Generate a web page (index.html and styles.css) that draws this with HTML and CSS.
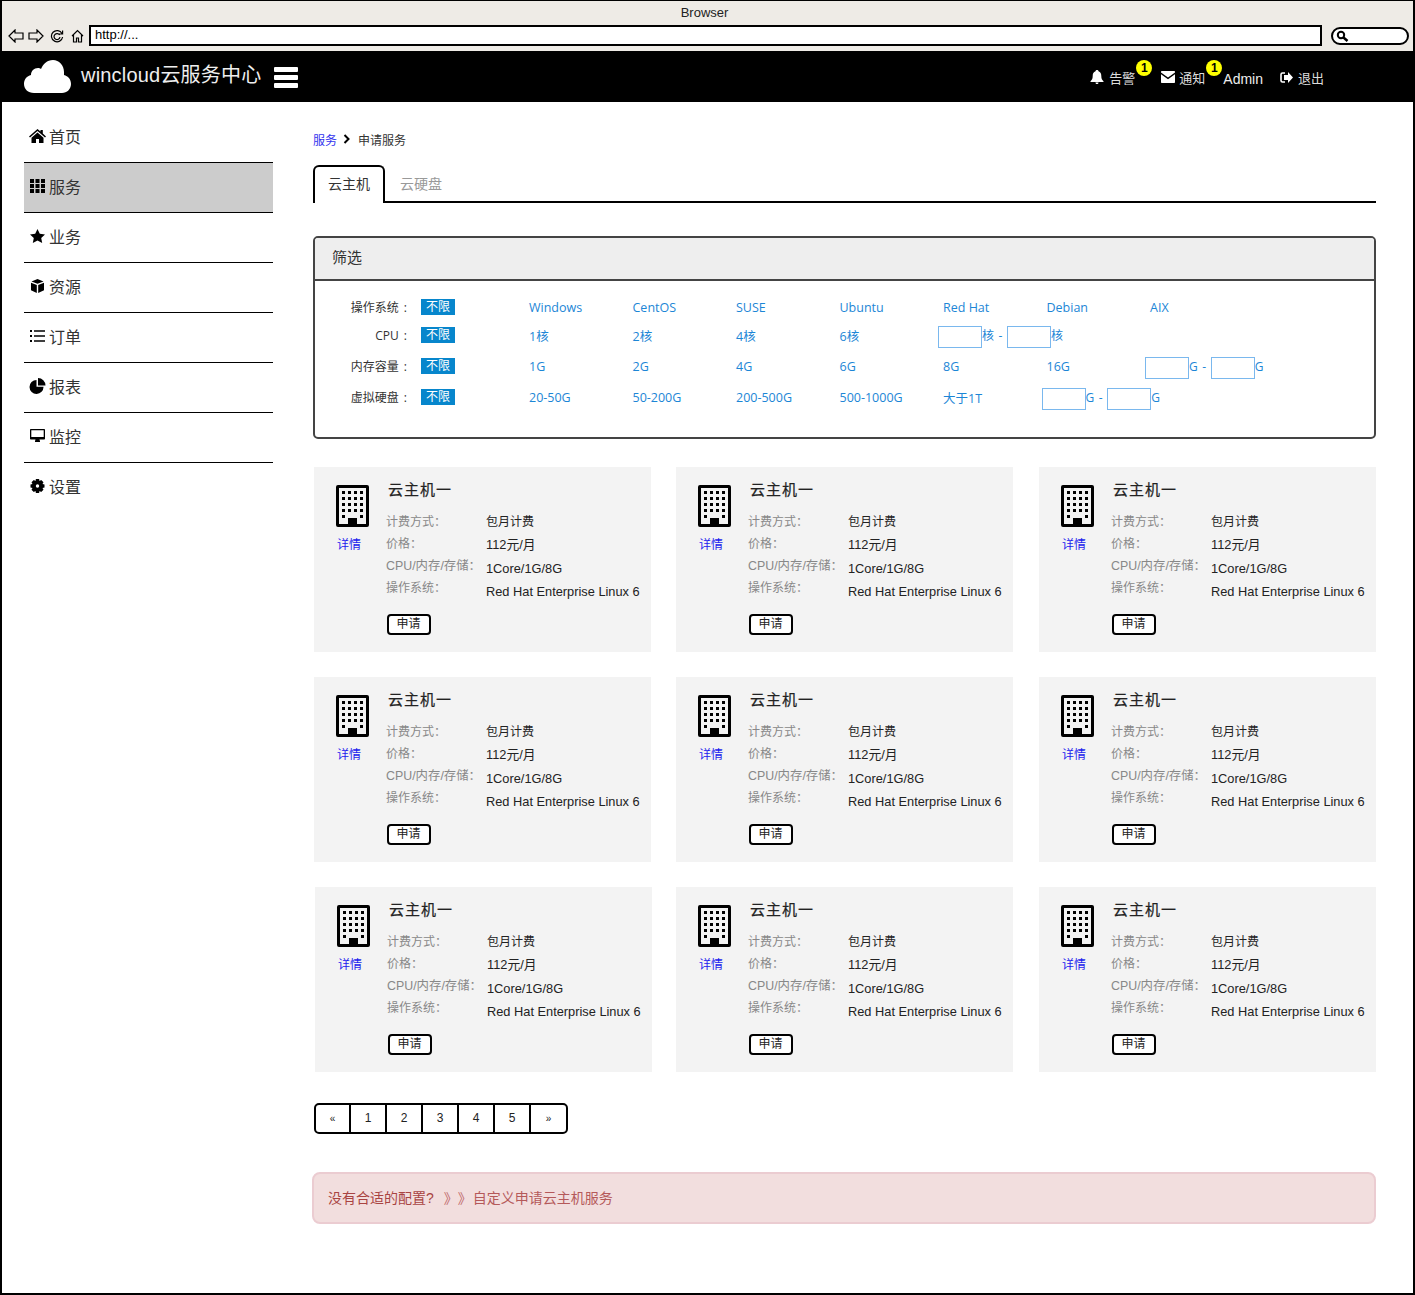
FILE: index.html
```html
<!DOCTYPE html>
<html lang="zh-CN">
<head>
  <meta charset="UTF-8" />
  <title>wincloud云服务中心</title>
  <link rel="stylesheet" href="styles.css">
</head>
<body>

<svg class="defs" width="0" height="0">
  <symbol id="i-building" viewBox="0 0 33 42">
    <path fill-rule="evenodd" d="M2 0H31a2 2 0 0 1 2 2V40a2 2 0 0 1-2 2H2a2 2 0 0 1-2-2V2a2 2 0 0 1 2-2ZM3 3V39H12V33H21V39H30V3Z"/>
    <path d="M6 6h3v3H6zM12 6h3v3h-3zM18 6h3v3h-3zM24 6h3v3h-3zM6 12h3v3H6zM12 12h3v3h-3zM18 12h3v3h-3zM24 12h3v3h-3zM6 18h3v3H6zM12 18h3v3h-3zM18 18h3v3h-3zM24 18h3v3h-3zM6 24h3v3H6zM12 24h3v3h-3zM18 24h3v3h-3zM24 24h3v3h-3zM6 30h3v3H6zM24 30h3v3h-3z"/>
  </symbol>
</svg>

<div class="frame">

  <!-- 浏览器外框 -->
  <div class="browser">
    <div class="browser-title">Browser</div>
    <div class="browser-bar">
      <svg class="nav-icon" width="16" height="14" viewBox="0 0 16 14"><path d="M1 7 7 1V4H15V10H7V13Z"/></svg>
      <svg class="nav-icon" width="16" height="14" viewBox="0 0 16 14"><path d="M15 7 9 1V4H1V10H9V13Z"/></svg>
      <svg class="nav-icon" width="14" height="14" viewBox="0 0 14 14"><path d="M12 4.5A5.6 5.6 0 1 0 12.6 8M12.6 1.5V5H9M9.6 6A3 3 0 1 0 10 8.2"/></svg>
      <svg class="nav-icon" width="13" height="14" viewBox="0 0 13 14"><path d="M1 7 6.500 1.500 12 7M2.500 6V13H5.500V9H7.500V13H10.500V6"/></svg>
      <div class="url-box">http://...</div>
      <div class="search-box">
        <svg width="13" height="12" viewBox="0 0 13 12"><circle cx="5" cy="5" r="3.200" fill="none" stroke="#000" stroke-width="2"/><path d="M7.500 7.500 11.500 11" stroke="#000" stroke-width="2.500"/></svg>
      </div>
    </div>
  </div>

  <!-- 顶部导航 -->
  <header class="topbar">
    <svg class="logo" width="47" height="33" viewBox="0 0 47 33"><path d="M10 33C4 33 0 29 0 24C0 19 3 16 7 15C7 11 10 8 14 8C15 8 16 8 17 9C19 4 23 0 29 0C35 0 40 5 40 12C40 13 40 14 40 15C44 16 47 19 47 24C47 29 43 33 38 33Z" fill="#fff"/></svg>
    <div class="brand">wincloud云服务中心</div>
    <div class="hamburger"><span></span><span></span><span></span></div>

    <div class="top-right">
      <div class="top-item">
        <svg width="14" height="14" viewBox="0 0 14 14"><path d="M7 0C8 0 8.500 .6 8.500 1.300C10.500 2 11.300 3.500 11.300 6C11.300 9 12.200 10 13.500 11.200V12H.5V11.200C1.800 10 2.700 9 2.700 6C2.700 3.500 3.500 2 5.500 1.300C5.500 .6 6 0 7 0ZM5.500 12.500H8.500C8.500 13.500 7.800 14 7 14S5.500 13.500 5.500 12.500Z" fill="#fff"/></svg>
        <span>告警</span>
        <b class="badge">1</b>
      </div>
      <div class="top-item">
        <svg width="14" height="12" viewBox="0 0 14 12"><path d="M1 0H13C13.600 0 14 .4 14 1V1.500L7 6.500 0 1.500V1C0 .4 .4 0 1 0ZM0 3.200 7 8.200 14 3.200V11C14 11.600 13.600 12 13 12H1C.4 12 0 11.600 0 11Z" fill="#fff"/></svg>
        <span>通知</span>
        <b class="badge">1</b>
      </div>
      <div class="top-admin">Admin</div>
      <div class="top-item">
        <svg width="13" height="11" viewBox="0 0 13 11"><path d="M5 1H2.500C1.500 1 1 1.500 1 2.500V8.500C1 9.500 1.500 10 2.500 10H5" fill="none" stroke="#fff" stroke-width="1.600"/><path d="M8 0 13 5.500 8 11V8H4V3H8Z" fill="#fff"/></svg>
        <span>退出</span>
      </div>
    </div>
  </header>

  <div class="layout">

    <!-- 左侧菜单 -->
    <ul class="sidebar">
      <li>
        <svg width="17" height="14" viewBox="0 0 17 14"><path d="M8.500 0 11.500 2.600V1H13.800V4.600L17 7.400 16 8.500 8.500 2.100 1 8.500 0 7.400ZM8.500 3.600 14.500 8.700V14H10V10H7V14H2.500V8.700Z"/></svg>
        首页
      </li>
      <li class="active">
        <svg width="15" height="14" viewBox="0 0 15 14"><path d="M0 0h4v4H0zM5.500 0h4v4h-4zM11 0h4v4h-4zM0 5h4v4H0zM5.500 5h4v4h-4zM11 5h4v4h-4zM0 10h4v4H0zM5.500 10h4v4h-4zM11 10h4v4h-4z"/></svg>
        服务
      </li>
      <li>
        <svg width="15" height="14" viewBox="0 0 15 14"><path d="M7.500 0 9.800 4.800 15 5.400 11.200 9 12.200 14 7.500 11.500 2.800 14 3.800 9 0 5.400 5.200 4.800Z"/></svg>
        业务
      </li>
      <li>
        <svg width="13" height="14" viewBox="0 0 13 14"><path d="M6.500 0 12.500 2.400 6.500 4.800 .5 2.400ZM0 3.800 5.800 6.100V14L0 11.200ZM13 3.800V11.200L7.200 14V6.100Z"/></svg>
        资源
      </li>
      <li>
        <svg width="15" height="12" viewBox="0 0 15 12"><path d="M0 0h2v2H0zM4 .2h11v1.600H4zM0 5h2v2H0zM4 5.200h11v1.600H4zM0 10h2v2H0zM4 10.200h11v1.600H4z"/></svg>
        订单
      </li>
      <li>
        <svg width="16" height="16" viewBox="0 0 16 16"><path d="M7 2V8.800H14A7 7 0 1 1 7 2ZM8.500 0A7.500 7.500 0 0 1 16 7.500H8.500Z"/></svg>
        报表
      </li>
      <li>
        <svg width="15" height="13" viewBox="0 0 15 13"><path fill-rule="evenodd" d="M1 0H14C14.600 0 15 .4 15 1V9.500C15 10.100 14.600 10.500 14 10.500H9.500L10 12.300V13H5V12.300L5.500 10.500H1C.4 10.500 0 10.100 0 9.500V1C0 .4 .4 0 1 0ZM1.300 1.300V8H13.700V1.300Z"/></svg>
        监控
      </li>
      <li>
        <svg width="14" height="14" viewBox="0 0 14 14"><path fill-rule="evenodd" d="M5.400 0H8.600L9 2 10.700 1 13 3.200 12 5 14 5.400V8.600L12 9 13 10.800 10.700 13 9 12 8.600 14H5.400L5 12 3.300 13 1 10.800 2 9 0 8.600V5.400L2 5 1 3.200 3.300 1 5 2ZM7 5.300A1.700 1.700 0 1 0 7 8.700 1.700 1.700 0 1 0 7 5.300Z"/></svg>
        设置
      </li>
    </ul>

    <main class="content">

      <div class="breadcrumb">
        <a>服务</a>
        <svg width="7" height="10" viewBox="0 0 7 10"><path d="M1.500 1 5.500 5 1.500 9" fill="none" stroke="#000" stroke-width="2"/></svg>
        <span>申请服务</span>
      </div>

      <div class="tabs">
        <div class="tab active">云主机</div>
        <div class="tab">云硬盘</div>
      </div>

      <section class="filter">
        <div class="filter-head">筛选</div>
        <div class="filter-body">
          <div class="filter-row row-os">
            <label>操作系统 :</label><span class="tag">不限</span>
            <a>Windows</a><a>CentOS</a><a>SUSE</a><a>Ubuntu</a><a>Red Hat</a><a>Debian</a><a>AIX</a>
          </div>
          <div class="filter-row row-cpu">
            <label>CPU :</label><span class="tag">不限</span>
            <a>1核</a><a>2核</a><a>4核</a><a>6核</a>
            <div class="range"><input type="text">核 - <input type="text">核</div>
          </div>
          <div class="filter-row row-mem">
            <label>内存容量 :</label><span class="tag">不限</span>
            <a>1G</a><a>2G</a><a>4G</a><a>6G</a><a>8G</a><a>16G</a>
            <div class="range"><input type="text">G - <input type="text">G</div>
          </div>
          <div class="filter-row row-disk">
            <label>虚拟硬盘 :</label><span class="tag">不限</span>
            <a>20-50G</a><a>50-200G</a><a>200-500G</a><a>500-1000G</a><a>大于1T</a>
            <div class="range"><input type="text">G - <input type="text">G</div>
          </div>
        </div>
      </section>

      <section class="cards">
        <div class="card">
          <div class="card-side"><svg class="bld" width="33" height="42"><use href="#i-building"/></svg><a>详情</a></div>
          <div class="card-main">
            <h4>云主机一</h4>
            <div class="specs">
              <div class="spec-labels"><span>计费方式：</span><span>价格：</span><span>CPU/内存/存储：</span><span>操作系统：</span></div>
              <div class="spec-values"><span>包月计费</span><span>112元/月</span><span>1Core/1G/8G</span><span>Red Hat Enterprise Linux 6</span></div>
            </div>
            <button>申请</button>
          </div>
        </div>
        <div class="card">
          <div class="card-side"><svg class="bld" width="33" height="42"><use href="#i-building"/></svg><a>详情</a></div>
          <div class="card-main">
            <h4>云主机一</h4>
            <div class="specs">
              <div class="spec-labels"><span>计费方式：</span><span>价格：</span><span>CPU/内存/存储：</span><span>操作系统：</span></div>
              <div class="spec-values"><span>包月计费</span><span>112元/月</span><span>1Core/1G/8G</span><span>Red Hat Enterprise Linux 6</span></div>
            </div>
            <button>申请</button>
          </div>
        </div>
        <div class="card">
          <div class="card-side"><svg class="bld" width="33" height="42"><use href="#i-building"/></svg><a>详情</a></div>
          <div class="card-main">
            <h4>云主机一</h4>
            <div class="specs">
              <div class="spec-labels"><span>计费方式：</span><span>价格：</span><span>CPU/内存/存储：</span><span>操作系统：</span></div>
              <div class="spec-values"><span>包月计费</span><span>112元/月</span><span>1Core/1G/8G</span><span>Red Hat Enterprise Linux 6</span></div>
            </div>
            <button>申请</button>
          </div>
        </div>
        <div class="card">
          <div class="card-side"><svg class="bld" width="33" height="42"><use href="#i-building"/></svg><a>详情</a></div>
          <div class="card-main">
            <h4>云主机一</h4>
            <div class="specs">
              <div class="spec-labels"><span>计费方式：</span><span>价格：</span><span>CPU/内存/存储：</span><span>操作系统：</span></div>
              <div class="spec-values"><span>包月计费</span><span>112元/月</span><span>1Core/1G/8G</span><span>Red Hat Enterprise Linux 6</span></div>
            </div>
            <button>申请</button>
          </div>
        </div>
        <div class="card">
          <div class="card-side"><svg class="bld" width="33" height="42"><use href="#i-building"/></svg><a>详情</a></div>
          <div class="card-main">
            <h4>云主机一</h4>
            <div class="specs">
              <div class="spec-labels"><span>计费方式：</span><span>价格：</span><span>CPU/内存/存储：</span><span>操作系统：</span></div>
              <div class="spec-values"><span>包月计费</span><span>112元/月</span><span>1Core/1G/8G</span><span>Red Hat Enterprise Linux 6</span></div>
            </div>
            <button>申请</button>
          </div>
        </div>
        <div class="card">
          <div class="card-side"><svg class="bld" width="33" height="42"><use href="#i-building"/></svg><a>详情</a></div>
          <div class="card-main">
            <h4>云主机一</h4>
            <div class="specs">
              <div class="spec-labels"><span>计费方式：</span><span>价格：</span><span>CPU/内存/存储：</span><span>操作系统：</span></div>
              <div class="spec-values"><span>包月计费</span><span>112元/月</span><span>1Core/1G/8G</span><span>Red Hat Enterprise Linux 6</span></div>
            </div>
            <button>申请</button>
          </div>
        </div>
        <div class="card card-nudge">
          <div class="card-side"><svg class="bld" width="33" height="42"><use href="#i-building"/></svg><a>详情</a></div>
          <div class="card-main">
            <h4>云主机一</h4>
            <div class="specs">
              <div class="spec-labels"><span>计费方式：</span><span>价格：</span><span>CPU/内存/存储：</span><span>操作系统：</span></div>
              <div class="spec-values"><span>包月计费</span><span>112元/月</span><span>1Core/1G/8G</span><span>Red Hat Enterprise Linux 6</span></div>
            </div>
            <button>申请</button>
          </div>
        </div>
        <div class="card">
          <div class="card-side"><svg class="bld" width="33" height="42"><use href="#i-building"/></svg><a>详情</a></div>
          <div class="card-main">
            <h4>云主机一</h4>
            <div class="specs">
              <div class="spec-labels"><span>计费方式：</span><span>价格：</span><span>CPU/内存/存储：</span><span>操作系统：</span></div>
              <div class="spec-values"><span>包月计费</span><span>112元/月</span><span>1Core/1G/8G</span><span>Red Hat Enterprise Linux 6</span></div>
            </div>
            <button>申请</button>
          </div>
        </div>
        <div class="card">
          <div class="card-side"><svg class="bld" width="33" height="42"><use href="#i-building"/></svg><a>详情</a></div>
          <div class="card-main">
            <h4>云主机一</h4>
            <div class="specs">
              <div class="spec-labels"><span>计费方式：</span><span>价格：</span><span>CPU/内存/存储：</span><span>操作系统：</span></div>
              <div class="spec-values"><span>包月计费</span><span>112元/月</span><span>1Core/1G/8G</span><span>Red Hat Enterprise Linux 6</span></div>
            </div>
            <button>申请</button>
          </div>
        </div>
      </section>

      <div class="pagination">
        <span class="edge">«</span><span>1</span><span>2</span><span>3</span><span>4</span><span>5</span><span class="edge">»</span>
      </div>

      <div class="notice">
        <span>没有合适的配置?</span>
        <span class="notice-arrows">》》</span>
        <a>自定义申请云主机服务</a>
      </div>

    </main>
  </div>
</div>

</body>
</html>
```

FILE: styles.css
```css
* {
  box-sizing: border-box;
}

html, body {
  margin: 0;
  padding: 0;
  background-color: #ffffff;
  font-family: "Liberation Sans", "Noto Sans CJK SC", sans-serif;
  color: #333;
}

.defs {
  position: absolute;
}

.frame {
  width: 1415px;
  height: 1295px;
  border: 2px solid #000;
  border-top-width: 1px;
  overflow: hidden;
}

/* browser chrome */
.browser {
  height: 50px;
  background: #eeebe6;
}

.browser-title {
  height: 22px;
  padding-right: 6px;
  line-height: 23px;
  text-align: center;
  font-size: 13px;
  color: #222;
}

.browser-bar {
  display: flex;
  align-items: center;
  height: 25px;
  padding: 0 4px 0 6px;
}

.nav-icon {
  fill: none;
  stroke: #000;
  stroke-width: 1.2;
  margin-right: 4px;
}

.nav-icon:nth-child(2) {
  margin-right: 6px;
}

.nav-icon:nth-child(3) {
  margin-right: 7px;
}

.url-box {
  flex: 1;
  height: 21px;
  margin-left: 1px;
  padding-left: 4px;
  line-height: 15px;
  font-size: 13px;
  color: #000;
  background: #fff;
  border: 2px solid #000;
}

.search-box {
  width: 78px;
  height: 18px;
  margin-left: 9px;
  padding-left: 3px;
  background: #fff;
  border: 2px solid #000;
  border-radius: 9px;
  display: flex;
  align-items: center;
}

/* top bar */
.topbar {
  height: 51px;
  background: #000;
  color: #fff;
  display: flex;
  align-items: center;
  padding: 0 89px 0 22px;
}

.logo {
  margin-right: 10px;
  margin-top: -1px;
}

.brand {
  font-size: 20px;
  letter-spacing: 0.2px;
  margin-top: -6px;
  color: #eee;
}

.hamburger {
  width: 24px;
  margin-left: 13px;
  margin-top: 5px;
}

.hamburger span {
  display: block;
  height: 5px;
  margin-bottom: 3px;
  background: #fff;
  border-radius: 1px;
}

.top-right {
  margin-left: auto;
  margin-top: 1px;
  display: flex;
  align-items: center;
  font-size: 13px;
}

.top-item {
  position: relative;
  display: flex;
  align-items: center;
  gap: 5px;
  color: #ddd;
}

.top-item:nth-child(1) {
  margin-right: 26px;
}

.top-item:nth-child(2) {
  gap: 4px;
}

.badge {
  position: absolute;
  top: -8px;
  right: -17px;
  width: 16px;
  height: 16px;
  line-height: 16px;
  border-radius: 50%;
  background: #ffff00;
  color: #000;
  font-size: 12px;
  text-align: center;
}

.top-admin {
  font-size: 14px;
  margin: 4px 17px 0 18px;
  color: #eee;
}

/* side menu */
.layout {
  display: flex;
}

.sidebar {
  width: 249px;
  margin: 11px 0 0 22px;
  padding: 0;
  list-style: none;
  flex-shrink: 0;
}

.sidebar li {
  height: 50px;
  display: flex;
  align-items: center;
  gap: 3px;
  padding-left: 5px;
  padding-bottom: 4px;
  font-size: 16px;
  border-bottom: 1px solid #000;
  color: #333;
}

.sidebar li:last-child {
  border-bottom: none;
}

.sidebar li svg {
  width: 17px;
  flex-shrink: 0;
}

.sidebar li.active {
  background: #cccccc;
  margin-top: -1px;
  height: 51px;
  border-top: 1px solid #000;
}

/* main area */
.content {
  width: 1063px;
  margin-left: 40px;
}

.breadcrumb {
  height: 20px;
  margin-top: 27px;
  display: flex;
  align-items: center;
  gap: 6px;
  font-size: 12px;
}

.breadcrumb a {
  color: #3333ee;
}

.breadcrumb span {
  margin-left: 2px;
}

.tabs {
  display: flex;
  margin-top: 16px;
  height: 38px;
  border-bottom: 2px solid #000;
  font-size: 14px;
}

.tab {
  width: 72px;
  text-align: center;
  line-height: 38px;
  color: #999;
}

.tab.active {
  height: 38px;
  color: #333;
  background: #fff;
  border: 2px solid #000;
  border-bottom: none;
  border-radius: 6px 6px 0 0;
  line-height: 34px;
}

/* filter panel */
.filter {
  margin-top: 33px;
  height: 203px;
  border: 2px solid #444;
  border-radius: 5px;
}

.filter-head {
  height: 43px;
  padding-left: 17px;
  line-height: 40px;
  font-size: 15px;
  background: #eeeeee;
  border-bottom: 2px solid #444;
  border-radius: 3px 3px 0 0;
}

.filter-body {
  padding-top: 18px;
  font-family: "Open Sans", "Noto Sans CJK SC", sans-serif;
  font-size: 12.5px;
}

.filter-row {
  display: grid;
  grid-template-columns: 92px 122px repeat(7, 103.5px);
  grid-template-rows: 16px;
  align-items: center;
  height: 16px;
  margin-bottom: 15px;
}

.row-os {
  margin-bottom: 12px;
}

.filter-row label {
  text-align: right;
  font-size: 12px;
  word-spacing: 2px;
  color: #333;
}

.filter-row a {
  color: #1c86d6;
}

.tag {
  width: 34px;
  height: 16px;
  line-height: 16px;
  margin-left: 14px;
  font-size: 12px;
  text-align: center;
  background: #0786cc;
  color: #fff;
}

.range {
  margin-left: -5px;
  margin-top: 3px;
  color: #1c86d6;
  font-size: 12px;
  word-spacing: 1.5px;
  white-space: nowrap;
}

.range input {
  width: 44px;
  height: 22px;
  padding: 0;
  margin: 0;
  vertical-align: middle;
  border: 1px solid #7ab8ee;
  background: #fff;
}

/* cards */
.cards {
  margin-top: 28px;
  margin-left: 1px;
  display: grid;
  grid-template-columns: repeat(3, 337px);
  column-gap: 25px;
  row-gap: 25px;
}

.card {
  height: 185px;
  display: flex;
  background: #f3f3f3;
}

.card:nth-child(3n),
.card-nudge {
  margin-left: 1px;
  margin-right: -1px;
}

.card-side {
  width: 72px;
  padding: 18px 0 0 22px;
}

.bld {
  display: block;
  fill: #000;
}

.card-side a {
  display: block;
  margin: 10px 0 0 1px;
  font-size: 12px;
  line-height: 16px;
  color: #2222ee;
}

.card-main h4 {
  margin: 13px 0 0 2px;
  font-size: 15px;
  line-height: 19px;
  font-weight: normal;
  letter-spacing: 1px;
  color: #222;
  -webkit-text-stroke: 0.2px #222;
}

.specs {
  display: flex;
  margin-top: 14px;
  font-size: 12px;
}

.spec-labels {
  width: 100px;
  color: #888;
}

.spec-labels span {
  display: block;
  height: 22px;
  line-height: 18px;
  white-space: nowrap;
}

.spec-labels span:nth-child(3) {
  font-size: 12.4px;
}

.spec-values {
  color: #222;
  font-size: 12.8px;
}

.spec-values span {
  display: block;
  height: 23.4px;
  line-height: 18px;
  white-space: nowrap;
}

.spec-values span:first-child {
  font-size: 12px;
}

button {
  display: block;
  width: 44px;
  height: 21px;
  margin: 7px 0 0 1px;
  padding: 0 1px 0 0;
  font-family: inherit;
  font-size: 12px;
  line-height: 17px;
  color: #222;
  background: #fff;
  border: 2px solid #000;
  border-radius: 4px;
}

/* pagination */
.pagination {
  display: inline-flex;
  margin: 31px 0 0 1px;
  height: 31px;
  border: 2px solid #000;
  border-radius: 5px;
  font-size: 12px;
  color: #222;
}

.pagination span {
  width: 36px;
  text-align: center;
  line-height: 27px;
  border-right: 2px solid #000;
}

.pagination span:last-child {
  border-right: none;
}

.pagination .edge {
  width: 35px;
  font-size: 10px;
}

/* notice */
.notice {
  margin-top: 38px;
  margin-left: -1px;
  height: 52px;
  display: flex;
  align-items: center;
  padding: 0 0 2px 14px;
  font-size: 14px;
  color: #a94442;
  background: #f2dede;
  border: 2px solid #ebccd1;
  border-radius: 8px;
}

.notice-arrows {
  margin: 0 1px 0 10px;
  font-size: 14px;
  text-spacing-trim: space-all;
  color: #c0686a;
}

.notice a {
  color: #b5595a;
}
```
